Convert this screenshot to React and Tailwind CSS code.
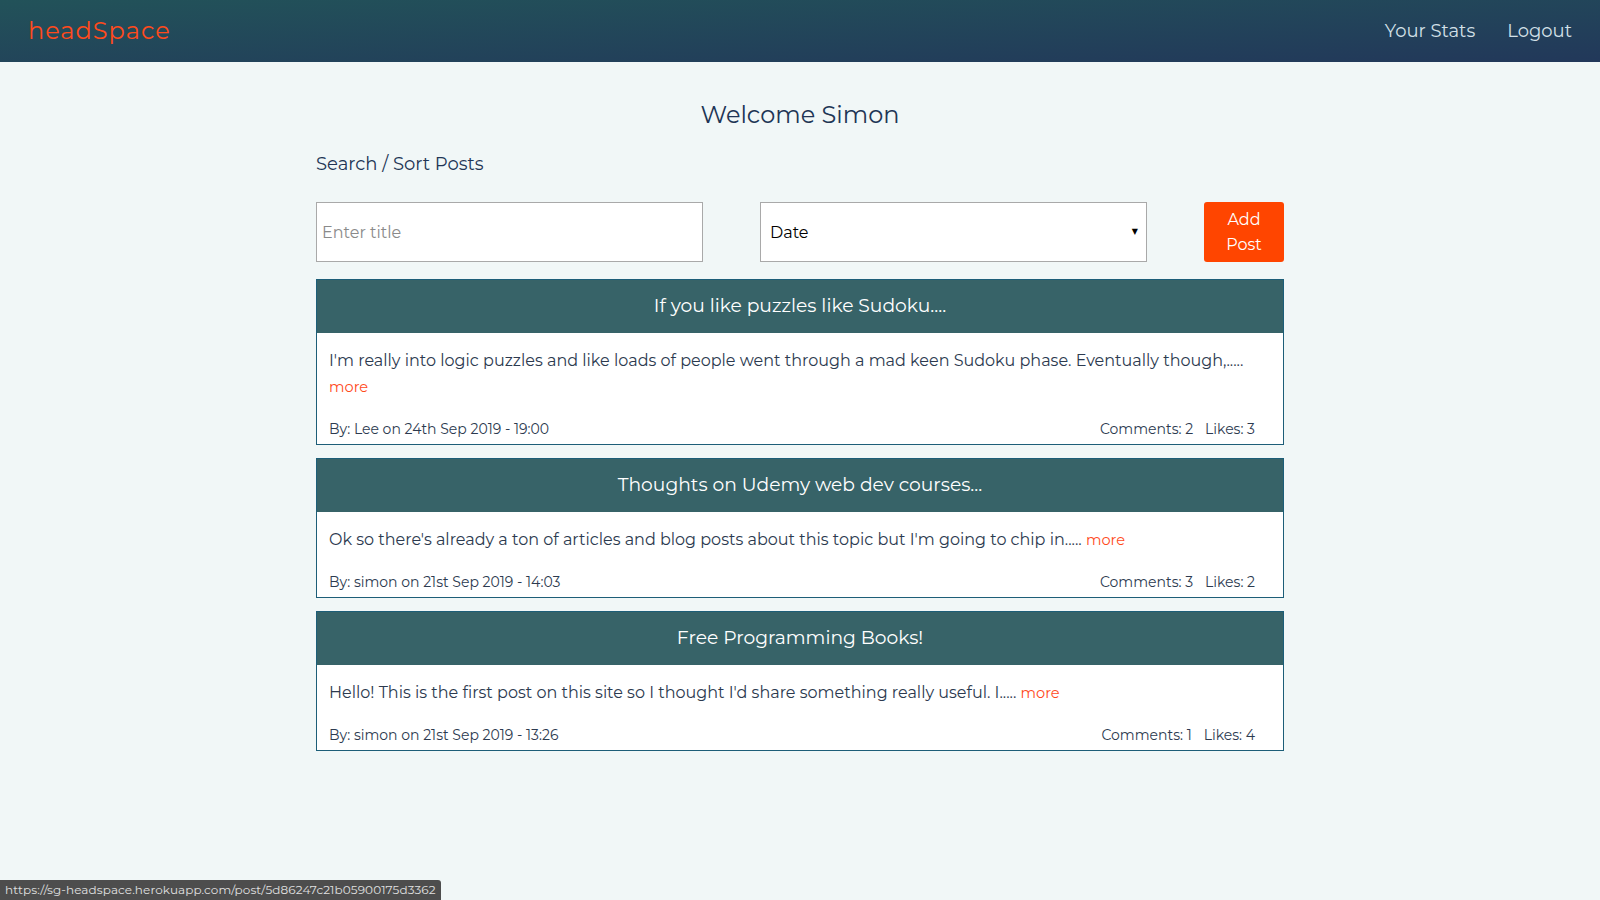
import React, { useState } from 'react';

const posts = [
  {
    id: 1,
    title: 'If you like puzzles like Sudoku....',
    body: "I'm really into logic puzzles and like loads of people went through a mad keen Sudoku phase. Eventually though,.....",
    author: 'Lee',
    date: '24th Sep 2019 - 19:00',
    comments: 2,
    likes: 3,
  },
  {
    id: 2,
    title: 'Thoughts on Udemy web dev courses...',
    body: "Ok so there's already a ton of articles and blog posts about this topic but I'm going to chip in.....",
    author: 'simon',
    date: '21st Sep 2019 - 14:03',
    comments: 3,
    likes: 2,
  },
  {
    id: 3,
    title: 'Free Programming Books!',
    body: "Hello! This is the first post on this site so I thought I'd share something really useful. I.....",
    author: 'simon',
    date: '21st Sep 2019 - 13:26',
    comments: 1,
    likes: 4,
  },
];

const PostCard = ({ post }) => (
  <div className="bg-white border border-[#1d5e78] flex flex-col">
    <div className="h-[53px] bg-[#376368] flex items-center justify-center text-white text-[18.7px]">
      {post.title}
    </div>
    <div className="px-[12px] pt-[15px] pb-[5px]">
      <p className="text-[16px] leading-[26px] text-[#2c3a4f]">
        {post.body} <a href="#" className="text-[#ff4a1c] text-[14.6px]">more</a>
      </p>
      <div className="mt-[19px] flex items-center justify-between pr-[16px] text-[14px] leading-[20px] text-[#2c3a4f]">
        <span>By: {post.author} on {post.date}</span>
        <div className="flex gap-[12px]">
          <span>Comments: {post.comments}</span>
          <span>Likes: {post.likes}</span>
        </div>
      </div>
    </div>
  </div>
);

export default function App() {
  const [title, setTitle] = useState('');

  return (
    <div className="min-h-[900px] bg-[#f1f7f7] font-['Montserrat','Open_Sans',sans-serif]">
      <nav className="h-[62px] px-[28px] flex items-center justify-between bg-gradient-to-br from-[#225259] to-[#22385a]">
        <span className="text-[24px] tracking-[1px] text-[#ff4a1c]">headSpace</span>
        <div className="flex items-center gap-[32px] text-[18px] text-[#d3e0e8]">
          <a href="#">Your Stats</a>
          <a href="#">Logout</a>
        </div>
      </nav>

      <main className="w-[968px] mx-auto">
        <h1 className="pt-[37px] text-center text-[24px] leading-[32px] text-[#213555]">Welcome Simon</h1>
        <h2 className="mt-[21px] text-[18px] leading-[24px] text-[#213555]">Search / Sort Posts</h2>

        <div className="mt-[26px] flex items-stretch justify-between h-[60px]">
          <input
            type="text"
            value={title}
            onChange={(e) => setTitle(e.target.value)}
            placeholder="Enter title"
            className="w-[387px] bg-white border border-[#a9a9a9] px-[5px] pt-[1px] text-[16px] placeholder-[#8a8a8a] outline-none"
          />
          <div className="relative w-[387px] bg-white border border-[#a9a9a9] flex items-center px-[9px] pt-[1px] text-[16px] text-black">
            Date
            <span className="absolute right-[8px] top-1/2 -translate-y-1/2 text-[8px] leading-none font-['DejaVu_Sans',sans-serif]">▼</span>
          </div>
          <button className="w-[80px] bg-[#ff4500] text-white text-[16px] leading-[25px] rounded-[3px]">
            Add<br />Post
          </button>
        </div>

        <div className="mt-[17px] flex flex-col gap-[13px]">
          {posts.map(p => <PostCard key={p.id} post={p} />)}
        </div>
      </main>

      <div className="fixed bottom-0 left-0 h-[20px] w-[441px] bg-[#4d4d4d] rounded-tr-[3px] px-[5px] flex items-center text-[12px] tracking-[0.1px] text-[#e0e0e0]">
        https://sg-headspace.herokuapp.com/post/5d86247c21b05900175d3362
      </div>
    </div>
  );
}
